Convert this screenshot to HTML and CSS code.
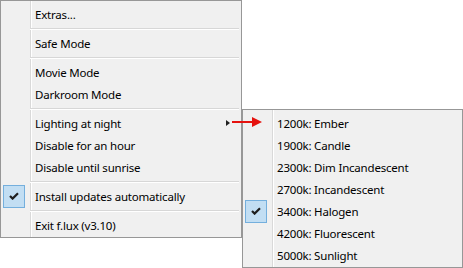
FILE: index.html
```html
<!DOCTYPE html>
<html>
<head>
<meta charset="utf-8">
<link rel="stylesheet" href="styles.css">
</head>
<body>
<div class="stage">
  <div class="menu main">
    <div class="item"><span class="gutter"></span><span class="label">Extras...</span></div>
    <div class="sep"></div>
    <div class="item"><span class="gutter"></span><span class="label">Safe Mode</span></div>
    <div class="sep"></div>
    <div class="item"><span class="gutter"></span><span class="label">Movie Mode</span></div>
    <div class="item"><span class="gutter"></span><span class="label">Darkroom Mode</span></div>
    <div class="sep"></div>
    <div class="item"><span class="gutter"></span><span class="label">Lighting at night</span><span class="sub-arrow"></span></div>
    <div class="item"><span class="gutter"></span><span class="label">Disable for an hour</span></div>
    <div class="item"><span class="gutter"></span><span class="label">Disable until sunrise</span></div>
    <div class="sep"></div>
    <div class="item"><span class="gutter"><span class="check"><svg width="10" height="8" viewBox="0 0 10 8"><path d="M1 4 L3.6 6.6 L9 1.2" fill="none" stroke="#1e1e1e" stroke-width="2.2"/></svg></span></span><span class="label">Install updates automatically</span></div>
    <div class="sep"></div>
    <div class="item"><span class="gutter"></span><span class="label">Exit f.lux (v3.10)</span></div>
  </div>
  <div class="menu submenu">
    <div class="item"><span class="gutter"></span><span class="label">1200k: Ember</span></div>
    <div class="item"><span class="gutter"></span><span class="label">1900k: Candle</span></div>
    <div class="item"><span class="gutter"></span><span class="label">2300k: Dim Incandescent</span></div>
    <div class="item"><span class="gutter"></span><span class="label">2700k: Incandescent</span></div>
    <div class="item"><span class="gutter"><span class="check"><svg width="10" height="8" viewBox="0 0 10 8"><path d="M1 4 L3.6 6.6 L9 1.2" fill="none" stroke="#1e1e1e" stroke-width="2.2"/></svg></span></span><span class="label">3400k: Halogen</span></div>
    <div class="item"><span class="gutter"></span><span class="label">4200k: Fluorescent</span></div>
    <div class="item"><span class="gutter"></span><span class="label">5000k: Sunlight</span></div>
  </div>
  <svg class="red-arrow" width="32" height="10" viewBox="0 0 32 10">
    <rect x="0" y="4" width="22" height="2" fill="#e5120e"/>
    <path d="M20 0 L30 5 L20 10 Z" fill="#e5120e"/>
  </svg>
</div>
</body>
</html>
```
FILE: styles.css
```css
html, body {
  margin: 0;
  padding: 0;
  background: #ffffff;
}
.stage {
  position: relative;
  display: flex;
  align-items: flex-start;
  width: 463px;
  height: 268px;
  overflow: hidden;
  font-family: "Noto Sans", "Open Sans", sans-serif;
  font-size: 11.5px;
  letter-spacing: -0.2px;
  color: #000;
}
.menu {
  box-sizing: border-box;
  border: 1px solid #979797;
  padding: 2px 0 1px 0;
  background:
    linear-gradient(to right, transparent 29px, #d9d9d9 29px, #d9d9d9 30px, #ffffff 30px, #ffffff 31px, transparent 31px),
    #f0f0f0;
  display: flex;
  flex-direction: column;
}
.main {
  width: 242px;
}
.submenu {
  width: 221px;
  margin-top: 109px;
}
.item {
  height: 22px;
  display: flex;
  align-items: center;
}
.gutter {
  width: 29px;
  height: 22px;
  flex: none;
  display: flex;
  align-items: center;
}
.label {
  margin-left: 5px;
  white-space: nowrap;
}
.check {
  box-sizing: border-box;
  width: 22px;
  height: 23px;
  margin-left: 2px;
  background: #c2def3;
  border: 1px solid #74afdd;
  display: flex;
  align-items: center;
  justify-content: center;
}
.sep {
  height: 7px;
  margin: 0 2px 0 29px;
  box-sizing: border-box;
  padding-top: 3px;
}
.sep::before {
  content: "";
  display: block;
  height: 1px;
  background: #d7d7d7;
  border-bottom: 1px solid #ffffff;
}
.sub-arrow {
  margin-left: auto;
  margin-right: 11px;
  width: 0;
  height: 0;
  border-top: 3.5px solid transparent;
  border-bottom: 3.5px solid transparent;
  border-left: 4px solid #202020;
}
.red-arrow {
  position: absolute;
  left: 232px;
  top: 117px;
}
```
